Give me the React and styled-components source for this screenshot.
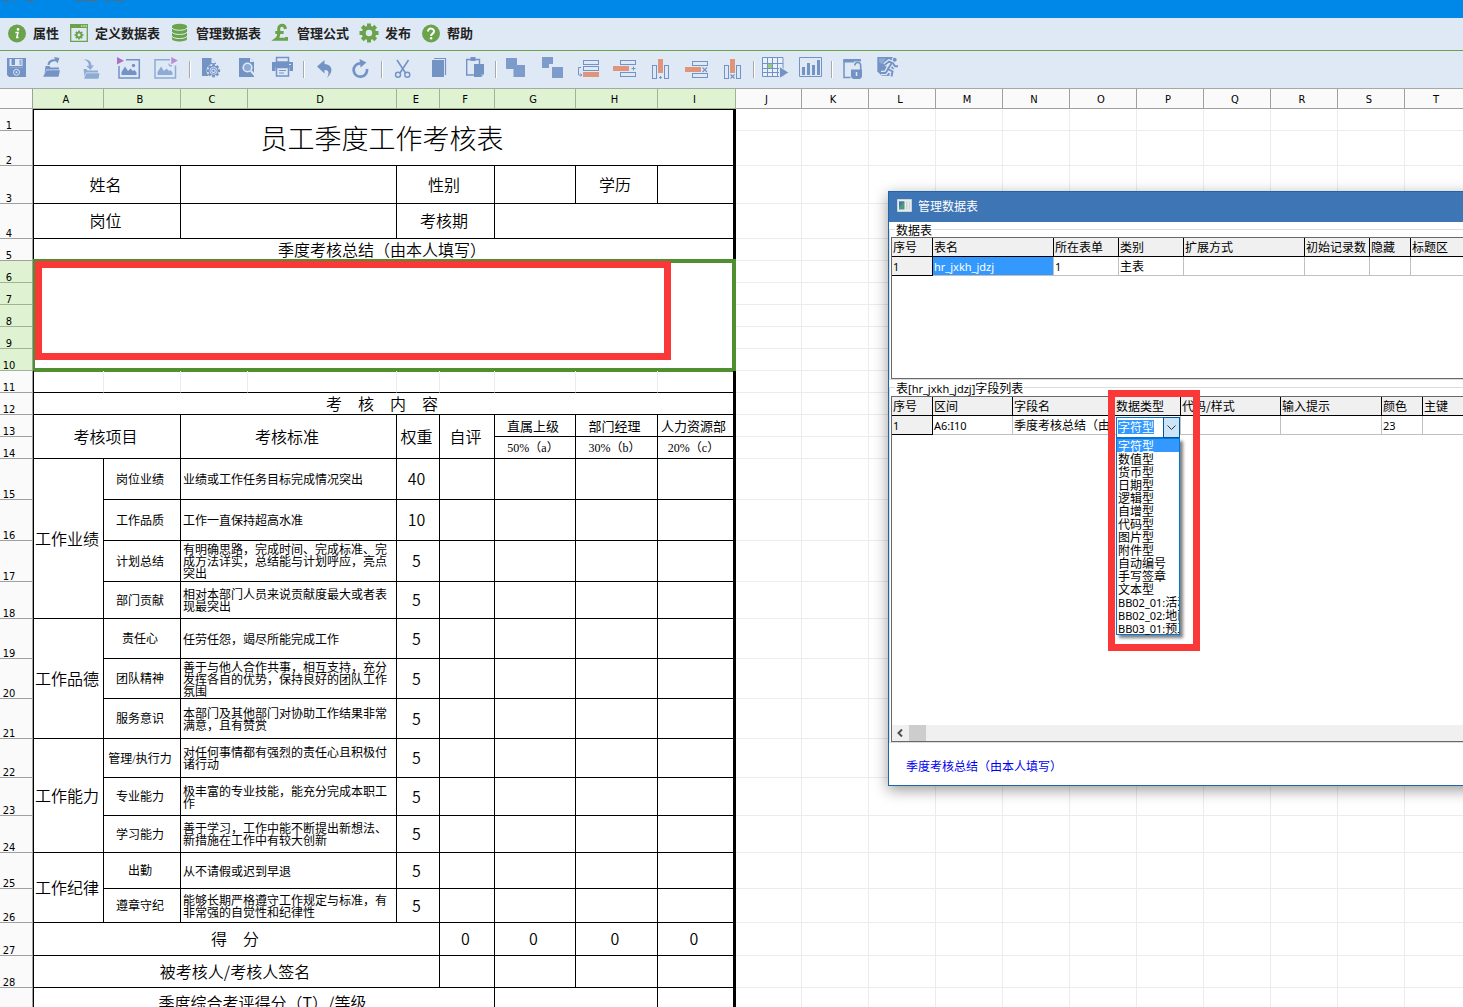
import React, { useEffect, useRef } from "react";
import styled, { createGlobalStyle } from "styled-components";

const GlobalStyle = createGlobalStyle`
  * {
    box-sizing: border-box;
  }

  body {
    margin: 0;
    background: #fff;
    color: #000;
    font-family: "Liberation Serif", "Noto Sans CJK SC", sans-serif;
    font-size: 12px;
  }

  button {
    border: 0;
    padding: 0;
    background: none;
    color: inherit;
    font: inherit;
  }
`;

const BLUE = "#7493c5";
const PALE = "#8fabd4";
const BACK = "#dfe9f6";
const ORANGE = "#e0957a";
const GREEN = "#6ba34a";

/* ---------- window frame ---------- */

const Page = styled.div`
  position: relative;
  height: 100vh;
  display: flex;
  flex-direction: column;
  overflow: hidden;
`;

const TitleStrip = styled.header`
  flex: none;
  height: 18px;
  background: #0088e9;

  svg {
    display: block;
  }
`;

const MenuBar = styled.nav`
  flex: none;
  height: 33px;
  display: flex;
  align-items: center;
  gap: 11px;
  padding: 0 0 2px 8px;
  background: ${BACK};
  border-bottom: 1px solid ${GREEN};
`;

const MenuButton = styled.button`
  display: flex;
  align-items: center;
  gap: 7px;
  font-family: "Noto Sans CJK SC", sans-serif;
  font-size: 13px;
  line-height: 18px;
  font-weight: 700;
  color: #222;
  white-space: nowrap;
`;

const ToolBar = styled.div`
  flex: none;
  height: 38px;
  display: flex;
  align-items: flex-start;
  padding: 6px 0 0 1px;
  background: ${BACK};
  border-bottom: 1px solid #a3ab9e;
`;

const ToolButton = styled.button`
  flex: none;
  width: ${(p) => (p.$wide ? 37 : 36)}px;
  height: 24px;
  padding-left: 6px;

  svg {
    display: block;
    overflow: visible;
  }
`;

const Divider = styled.span`
  flex: none;
  width: 1px;
  height: 17px;
  margin: 4px 2px 0 3px;
  background: #a9a9a9;
  box-shadow: 1px 0 0 #fff;
`;

/* ---------- sheet ---------- */

const Sheet = styled.main`
  flex: 1;
  min-height: 0;
  overflow: hidden;
`;

const SheetTable = styled.table`
  table-layout: fixed;
  width: 1px;
  border-collapse: separate;
  border-spacing: 0;
`;

const ColHead = styled.th`
  height: 20px;
  padding: 1px 4px 0 0;
  font: 400 11px "DejaVu Sans Condensed", "Noto Sans", sans-serif;
  background: ${(p) => (p.$on ? "#dff3d2" : "#fafafa")};
  border-right: 1px solid ${(p) => (p.$on ? "#a0b394" : "#a0a0a0")};
  border-bottom: 1px solid ${(p) => (p.$on ? "#a0b394" : "#a0a0a0")};
`;

const RowHead = styled.th`
  padding: 0 14px 0 0;
  vertical-align: bottom;
  text-align: center;
  font: 400 11px/9px "DejaVu Sans Condensed", "Noto Sans", sans-serif;
  background: ${(p) => (p.$on ? "#dff3d2" : "#fafafa")};
  border-right: 1px solid #a0a0a0;
  border-bottom: 1px solid ${(p) => (p.$on ? "#a0b394" : "#a0a0a0")};
`;

const Row = styled.tr`
  height: ${(p) => p.$h}px;
`;

const Cell = styled.td`
  position: relative;
  padding: ${(p) => (p.$left ? "2px 6px 0 2px" : p.$size < 16 ? "3px 4px 0 0" : "0 3px 0 0")};
  font-family: ${(p) => (p.$size < 16 ? '"Liberation Serif", ' : "")}"Noto Sans CJK SC", sans-serif;
  font-size: ${(p) => p.$size}px;
  line-height: ${(p) => (p.$left ? "12px" : "1.1")};
  font-weight: ${(p) => (p.$size < 16 ? 400 : p.$size > 16 ? 300 : 350)};
  text-align: ${(p) => (p.$left ? "left" : "center")};
  white-space: ${(p) => (p.$left ? "normal" : "pre")};
  border-right: ${(p) => (p.$last ? "3px solid #000" : p.$soft ? "1px solid #ececec" : "1px solid #000")};
  border-bottom: 1px solid #000;
  border-left: ${(p) => (p.$first ? "1px solid #000" : "0")};
  border-top: ${(p) => (p.$top ? "1px solid #000" : "0")};
`;

const BlankCell = styled.td`
  padding: 0;
  border-right: 1px solid #ececec;
  border-bottom: 1px solid #ececec;
`;

const Selection = styled.div`
  position: absolute;
  top: -2px;
  right: -3px;
  bottom: -2px;
  left: -1px;
  border: 4px solid #4f8f2f;
  border-left-width: 2px;
`;

const Frame = styled.div`
  position: absolute;
  border: 7px solid #fb3838;
  pointer-events: none;
`;

const SummaryFrame = styled(Frame)`
  top: 0;
  left: 1px;
  right: 62px;
  bottom: 10px;
`;

const TypeFrame = styled(Frame)`
  top: 198px;
  left: 219px;
  width: 92px;
  height: 261px;
`;

/* ---------- dialog ---------- */

const Dialog = styled.section`
  position: absolute;
  top: 191px;
  left: 888px;
  width: 640px;
  background: #fff;
  border: 1px solid #2065ab;
  box-shadow: 0 4px 14px rgba(0, 0, 0, 0.4);
  font-family: "Noto Sans CJK SC", sans-serif;
  font-size: 12px;
`;

const DialogTitle = styled.h2`
  height: 30px;
  margin: 0;
  padding: 0 0 3px 8px;
  display: flex;
  align-items: center;
  gap: 6px;
  background: #3e75b4;
  color: #fff;
  font-size: 12px;
  font-weight: 400;
`;

const Group = styled.fieldset`
  min-width: 0;
  margin: 0;
  padding: 0 0 0 1px;
  border: 1px solid #dcdcdc;

  & + & {
    padding-top: 1px;
  }

  legend {
    margin-left: 4px;
    padding: 0 1px;
    line-height: 15px;
  }
`;

const GridBox = styled.div`
  display: flex;
  flex-direction: column;
  justify-content: space-between;
  min-height: ${(p) => p.$h}px;
  border: 1px solid #696969;
`;

const Grid = styled.table`
  table-layout: fixed;
  width: 100%;
  border-collapse: separate;
  border-spacing: 0;

  th,
  td {
    height: 19px;
    padding: 0 0 0 1px;
    text-align: left;
    font-weight: 400;
    line-height: 16px;
    white-space: nowrap;
    overflow: hidden;
  }

  thead th {
    background: #f0f0f0;
    border-right: 1px solid #000;
    border-bottom: 1px solid #000;
  }
`;

const GridIndex = styled.th`
  background: #f0f0f0;
  border-right: 1px solid #000;
  border-bottom: 1px solid #000;
`;

const GridCell = styled.td`
  background: ${(p) => (p.$active ? "#3399ff" : "#fff")};
  color: ${(p) => (p.$active ? "#fff" : "#000")};
  border-right: 1px solid #c0c0c0;
  border-bottom: 1px solid #c0c0c0;
`;

const ComboCell = styled(GridCell)`
  && {
    position: relative;
    overflow: visible;
  }
`;

const Latin = styled.span`
  font-family: "Noto Sans", sans-serif;
  font-size: 11px;
  line-height: 11px;
`;

const Combo = styled.div`
  position: absolute;
  top: 1px;
  left: 1px;
  width: 64px;
`;

const ComboField = styled.div`
  display: flex;
  height: 21px;

  input {
    flex: 1;
    min-width: 0;
    padding: 0 0 2px 1px;
    border: 1px solid #0078d7;
    border-right: 0;
    outline: 0;
    background: #fff;
    font: 12px/14px "Noto Sans CJK SC", sans-serif;
  }

  input::selection {
    background: #3399ff;
    color: #fff;
  }

  button {
    width: 17px;
    display: flex;
    align-items: center;
    justify-content: center;
    background: #cce4f7;
    border: 1px solid #005499;
  }
`;

const OptionList = styled.ul`
  margin: 0;
  padding: 0;
  list-style: none;
  background: #fff;
  border: 1px solid #0078d7;
  box-shadow: 3px 3px 3px rgba(0, 0, 0, 0.5);
`;

const Option = styled.li`
  height: 13px;
  padding-left: 1px;
  line-height: 13px;
  white-space: nowrap;
  overflow-x: clip;
  overflow-y: visible;
  background: ${(p) => (p.$active ? "#3399ff" : "transparent")};
  color: ${(p) => (p.$active ? "#fff" : "#000")};
`;

const ScrollTrack = styled.div`
  display: flex;
  height: 16px;
  background: #f0f0f0;

  button {
    width: 17px;
    padding-right: 2px;
    display: flex;
    align-items: center;
    justify-content: center;
  }
`;

const ScrollThumb = styled.div`
  width: 17px;
  background: #cdcdcd;
`;

const DialogNote = styled.p`
  margin: 0;
  padding: 14px 17px 10px;
  line-height: 18px;
  color: #0000f0;
`;

/* ---------- icons ---------- */

const teeth = (cx, cy, r, n, w, color) =>
  Array.from({ length: n }, (_, i) => (
    <rect
      key={i}
      x={cx - w / 2}
      y={cy - r}
      width={w}
      height={r}
      fill={color}
      transform={`rotate(${(360 / n) * i} ${cx} ${cy})`}
    />
  ));

const Gear = ({ cx, cy, r, color, hole }) => (
  <>
    {teeth(cx, cy, r, 8, r * 0.42, color)}
    <circle cx={cx} cy={cy} r={r * 0.76} fill={color} />
    <circle cx={cx} cy={cy} r={r * 0.34} fill={hole} />
  </>
);

const MENU = [
  {
    label: "属性",
    icon: (
      <>
        <circle cx="9" cy="9.5" r="9" fill={GREEN} />
        <circle cx="10" cy="5.4" r="1.3" fill="#fff" />
        <path d="M7.4 8.4h2.6l-1.2 5.2h1.7" fill="none" stroke="#fff" strokeWidth="1.5" />
      </>
    ),
  },
  {
    label: "定义数据表",
    icon: (
      <>
        <path d="M.7.7h16.6v16.6H.7z" fill="none" stroke={GREEN} strokeWidth="1.3" />
        <path d="M0 0h18v4H0z" fill={GREEN} />
        <path d="M11 2h1.5M13.3 2h1.5M15.5 2h1.5" stroke="#fff" strokeWidth="1" />
        <Gear cx={9} cy={11} r={4.4} color={GREEN} hole={BACK} />
      </>
    ),
  },
  {
    label: "管理数据表",
    icon: (
      <>
        <path d="M1 2.5v12.500c0 3.300 15 3.300 15 0V2.500z" fill={GREEN} />
        <ellipse cx="8.5" cy="2.5" rx="7.5" ry="2.7" fill={GREEN} />
        <path d="M1 4c1.500 3 13.500 3 15 0M1 8.200c1.500 3 13.500 3 15 0M1 12.300c1.500 3 13.500 3 15 0" fill="none" stroke={BACK} strokeWidth="1" />
      </>
    ),
  },
  {
    label: "管理公式",
    icon: (
      <path
        d="M13.500 5C13-.300 6.500 0 6.700 5c.1 3.600 1.200 7.500-2.700 10.300h10.500v-2.300M3.300 8.500h8.300"
        fill="none"
        stroke={GREEN}
        strokeWidth="3"
      />
    ),
  },
  { label: "发布", icon: <Gear cx={9} cy={9} r={9.5} color={GREEN} hole={BACK} /> },
  {
    label: "帮助",
    icon: (
      <>
        <circle cx="9" cy="9.5" r="9" fill={GREEN} />
        <path d="M6 7.500c0-4 6.200-3.700 6 .1 0 2-2.900 2-2.900 4.300" fill="none" stroke="#fff" strokeWidth="2" />
        <circle cx="9.1" cy="14.3" r="1.2" fill="#fff" />
      </>
    ),
  },
];

const Outline = ({ x, y, w, h }) => (
  <rect x={x} y={y} width={w} height={h} fill="none" stroke={BLUE} strokeWidth="1" />
);

const TOOLS = [
  [
    {
      name: "保存",
      icon: (
        <>
          <path d="M0 1h19v19H2l-2-2z" fill={BLUE} />
          <path d="M2.5 2h13v7h-13z" fill={BACK} />
          <path d="M4.500 2h3.500v6H4.500z" fill={BLUE} />
          <path d="M12.500 2.500h2V8h-2z" fill={PALE} />
          <path d="M3 10.500h13" stroke={PALE} />
          <circle cx="9.5" cy="15.3" r="3" fill="none" stroke={BACK} strokeWidth="1" />
          <circle cx="9.5" cy="15.3" r="1" fill={BACK} />
        </>
      ),
    },
    {
      name: "打开",
      icon: (
        <>
          <path d="M1.500 9h4l1 1.500H15V12.500H2.500L.5 17zM2.800 13.300H16L14.500 19.700H-1z" fill={BLUE} />
          <path d="M3.500 8C4 3.500 7.500 2 11 2.300L10 0l5.500 1-2 5.500-1.300-2C9 3.800 6 5 5.500 8z" fill={BLUE} />
        </>
      ),
    },
    {
      name: "导入",
      icon: (
        <>
          <path d="M2.500 12h3l1 1.500H17v2H5l-1.500 4zM5.300 16.300H18.500L17.500 21.700H3z" fill={PALE} />
          <path d="M2.500 2.500C8 1.800 10.500 4.500 10.500 8.500l2.500-.5-3.500 5L5 8.800l2.700.2C8 5.500 6 3.500 2.500 2.500z" fill={PALE} />
        </>
      ),
    },
    {
      name: "插入图片",
      icon: (
        <>
          <path d="M8 2.700h13.300V21H1V9" fill="none" stroke={BLUE} strokeWidth="1.500" />
          <path d="M3.500 18v-3l3.500-5.500 3 4.500 2.500-2.500 2.500 2.500 1.500-1 2 2.500V18z" fill={BLUE} />
          <circle cx="15.5" cy="8.5" r="1.7" fill={BLUE} />
          <path d="M-1 0v7.500l7-3.700z" fill="#ad6fc9" />
        </>
      ),
    },
    {
      name: "导出图片",
      icon: (
        <>
          <path d="M15 2.700H0V21h20.500V8.500" fill="none" stroke={PALE} strokeWidth="1.500" />
          <path d="M2.500 18v-3L6 9.500l3 4.500 2.500-2.500L14 14l1.500-1 2 2.500V18z" fill={PALE} />
          <path d="M14 6.500c-.300 2 1.500 3 3 2" fill="none" stroke={PALE} strokeWidth="1.200" />
          <path d="M16.300 0v7.200l6.500-3.600z" fill="#b98ad0" />
        </>
      ),
    },
  ],
  [
    {
      name: "页面设置",
      icon: (
        <>
          <path d="M4 1h9.500l4.500 5v13H4z" fill={BLUE} />
          <path d="M13.500 1v5H18z" fill={BACK} />
          <circle cx="15.500" cy="13.700" r="7" fill={BACK} />
          <Gear cx={15.5} cy={13.7} r={6.6} color={BLUE} hole={BACK} />
          <circle cx="15.500" cy="13.700" r="3.600" fill="none" stroke={BACK} strokeWidth=".8" />
          <circle cx="15.500" cy="13.700" r="1.200" fill={BLUE} />
        </>
      ),
    },
    {
      name: "预览",
      icon: (
        <>
          <path d="M5 1h11l4 4v15H5z" fill={BLUE} />
          <path d="M16 1v4h4z" fill={BACK} />
          <circle cx="13.500" cy="10.500" r="4.300" fill={PALE} stroke={BACK} strokeWidth="1.600" />
          <path d="M17 14l3.500 4" stroke={BACK} strokeWidth="2" />
        </>
      ),
    },
    {
      name: "打印",
      icon: (
        <>
          <path d="M6.500.5h12V5h-12z" fill={BACK} stroke={BLUE} strokeWidth="1.500" />
          <path d="M2 5h21V14h-3.500v-3.500h-14V14H2z" fill={BLUE} />
          <path d="M19 7.500h2" stroke={BACK} />
          <path d="M6.500 10.500h12v8.500h-12z" fill={BACK} stroke={BLUE} strokeWidth="1.500" />
          <path d="M9 13.500h7M9 16h5" stroke={BLUE} />
        </>
      ),
    },
  ],
  [
    {
      name: "撤销",
      icon: <path d="M5 9.500L12.500 3v4c8 .5 9.500 7.500 2.500 14 2.800-5.500 1.500-8-2.500-8v3.500z" fill={BLUE} />,
    },
    {
      name: "重做",
      icon: (
        <>
          <path d="M12 6.300a6.700 6.700 0 1 0 7 5.700" fill="none" stroke={BLUE} strokeWidth="2.700" />
          <path d="M11.500 2l7 3.500-6 5z" fill={BLUE} />
        </>
      ),
    },
  ],
  [
    {
      name: "剪切",
      icon: (
        <>
          <path d="M7 3l8.500 13M18.500 3L10 16" fill="none" stroke={BLUE} strokeWidth="1.600" />
          <circle cx="8" cy="17.700" r="2.500" fill="none" stroke={BLUE} strokeWidth="1.400" />
          <circle cx="17.300" cy="17.700" r="2.500" fill="none" stroke={BLUE} strokeWidth="1.400" />
        </>
      ),
    },
    {
      name: "复制",
      icon: (
        <>
          <path d="M8 1.500h11.500V18" fill="none" stroke={BLUE} strokeWidth="1.200" />
          <path d="M6 3h12v17H6z" fill={BLUE} />
        </>
      ),
    },
    {
      name: "粘贴",
      icon: (
        <>
          <path d="M4.700 2.500h12.800v15.500H4.700z" fill={BACK} stroke={BLUE} strokeWidth="1.400" />
          <path d="M8.500 0h5v4h-5z" fill={BLUE} />
          <path d="M12 7h10v10l-3 3h-7z" fill={BLUE} />
          <path d="M19 20v-3h3z" fill={PALE} />
        </>
      ),
    },
  ],
  [
    {
      name: "合并单元格",
      icon: <path d="M2 1h11v7h8v12H9.500v-8H2z" fill="#7d9bcb" />,
    },
    {
      name: "拆分单元格",
      icon: <path d="M2 0h11v7H9v4H2zM12 10h11v11H12z" fill="#7d9bcb" />,
    },
    {
      name: "追加行",
      icon: (
        <>
          <Outline x={7.5} y={3.5} w={15} h={4} />
          <Outline x={7.5} y={9.5} w={15} h={4} />
          <path d="M7 15h16v5H7z" fill={ORANGE} />
          <path d="M5 10.500H2.500v7.500H6M4.500 16.500L6 18l-1.500 1.500" fill="none" stroke={BLUE} />
        </>
      ),
    },
    {
      name: "插入行",
      icon: (
        <>
          <Outline x={8.5} y={3.5} w={15} h={4} />
          <Outline x={8.5} y={15.5} w={15} h={4} />
          <path d="M1 9h16v5H1z" fill={ORANGE} />
          <path d="M19.500 11.500h4M21.500 9.500v4" stroke={BLUE} />
        </>
      ),
    },
    {
      name: "插入列",
      icon: (
        <>
          <Outline x={4.5} y={8.5} w={4} h={13} />
          <Outline x={16.5} y={8.5} w={4} h={13} />
          <path d="M10 2h5v14h-5z" fill={ORANGE} />
          <path d="M11 20.500h3M12.500 19v3" stroke={BLUE} />
        </>
      ),
    },
    {
      name: "删除行",
      icon: (
        <>
          <Outline x={8.5} y={4.5} w={15} h={4} />
          <Outline x={8.5} y={16.5} w={15} h={4} />
          <path d="M1 10h16v5H1z" fill={ORANGE} />
          <path d="M18.500 10.500l4.500 4.500M23 10.500L18.500 15" stroke={BLUE} strokeWidth="1.200" />
        </>
      ),
    },
    {
      name: "删除列",
      icon: (
        <>
          <Outline x={4.5} y={8.5} w={4} h={13} />
          <Outline x={16.5} y={8.5} w={4} h={13} />
          <path d="M10 2h5v14h-5z" fill={ORANGE} />
          <path d="M10.500 17.500l4 4M14.500 17.500l-4 4" stroke={BLUE} strokeWidth="1.200" />
        </>
      ),
    },
  ],
  [
    {
      name: "数据区域",
      icon: (
        <>
          <path d="M.5.5h20.500v19H.5z" fill="#e8f0fa" stroke={BLUE} />
          <path d="M5.500 0v19.500M10.500 0v19.500M15.500 0v19.500M0 6.500h21M0 11.500h21M0 15.500h21" stroke={BLUE} />
          <path d="M6 7h4v4H6z" fill="#96cc7c" />
          <path d="M17.500 9.500v12l9.500-6z" fill={BLUE} stroke={BACK} />
        </>
      ),
    },
    {
      name: "图表",
      icon: (
        <>
          <path d="M1.500.5h22v19h-22z" fill="none" stroke={BLUE} />
          <path d="M4 10h3v8H4zM9 6h3v12H9zM14 8h3v10h-3zM19 3h3v15h-3z" fill={BLUE} />
        </>
      ),
    },
  ],
  [
    {
      name: "锁定",
      icon: (
        <>
          <path d="M20 2v5M4 3v17.500H10.500" fill="none" stroke={BLUE} strokeWidth="1.500" />
          <path d="M3.300 2h17.400v3.500H3.300z" fill={BLUE} />
          <path d="M14 4.500h7.500V12H14z" fill={BACK} />
          <path d="M14.800 8.500c0-4 5.900-4 5.900 0V13" fill="none" stroke={BLUE} strokeWidth="1.600" />
          <path d="M11 12.500h11V20l-2 2h-7l-2-2z" fill={BLUE} />
          <path d="M16.500 15v4" stroke={BACK} strokeWidth="1.500" />
        </>
      ),
    },
    {
      name: "退出",
      icon: (
        <>
          <path d="M1.300 0H18v16l-3 2.500L12 19H6l-4.700-4.500z" fill={BLUE} />
          <path d="M3 1.500h7L5.500 7 3 5z" fill={PALE} />
          <path d="M8.500 8l4.500-3.500 4 1.700 2 3h3M15 6.500l-3 5.500 4.500 2.500-1 5M12 12.500L9.500 16H5" fill="none" stroke={BACK} strokeWidth="4.500" />
          <circle cx="18.700" cy="2.700" r="3" fill={BACK} />
          <circle cx="18.700" cy="2.700" r="2" fill={BLUE} />
          <path d="M8.500 8l4.500-3.500 4 1.700 2 3h3M15.500 6.500L12 12l4.500 2.500-1 5M12 12.500L9.500 16H5" fill="none" stroke={BLUE} strokeWidth="1.900" />
        </>
      ),
    },
  ],
];

/* ---------- sheet data ---------- */

const COLUMNS = [
  ["A", 71], ["B", 77], ["C", 67], ["D", 149], ["E", 43], ["F", 55],
  ["G", 81], ["H", 82], ["I", 78], ["J", 66],
  ..."KLMNOPQRST".split("").map((c) => [c, 67]),
];
const FORM_COLUMNS = 9;

const scores = [{}, {}, {}, { last: true }];

const item = (name, text, weight) => [
  { text: name, size: 12 },
  { text, size: 12, span: 2, left: true },
  { text: weight },
  ...scores,
];

const group = (text, rows) => ({ text, rows, first: true });

const ROWS = [
  { h: 22, cells: [{ text: "员工季度工作考核表", size: 27, span: 9, rows: 2, first: true, last: true, top: true }] },
  { h: 35, cells: [] },
  {
    h: 38,
    cells: [{ text: "姓名", span: 2, first: true }, { span: 2 }, { text: "性别", span: 2 }, {}, { text: "学历" }, { last: true }],
  },
  {
    h: 35,
    cells: [{ text: "岗位", span: 2, first: true }, { span: 2 }, { text: "考核期", span: 2 }, { span: 3, last: true }],
  },
  { h: 22, cells: [{ text: "季度考核总结（由本人填写）", span: 9, first: true, last: true }] },
  { h: 22, on: true, cells: [{ span: 9, rows: 5, first: true, last: true, selected: true }] },
  { h: 22, on: true, cells: [] },
  { h: 22, on: true, cells: [] },
  { h: 22, on: true, cells: [] },
  { h: 22, on: true, cells: [] },
  {
    h: 22,
    cells: Array.from({ length: 9 }, (_, i) => ({ soft: true, first: i === 0, last: i === 8 })),
  },
  { h: 22, cells: [{ text: "考　核　内　容", span: 9, first: true, last: true }] },
  {
    h: 22,
    cells: [
      { text: "考核项目", span: 2, rows: 2, first: true },
      { text: "考核标准", span: 2, rows: 2 },
      { text: "权重", rows: 2 },
      { text: "自评", rows: 2 },
      { text: "直属上级", size: 13 },
      { text: "部门经理", size: 13 },
      { text: "人力资源部", size: 13, last: true },
    ],
  },
  {
    h: 22,
    cells: [
      { text: "50%（a）", size: 12 },
      { text: "30%（b）", size: 12 },
      { text: "20%（c）", size: 12, last: true },
    ],
  },
  { h: 41, cells: [group("工作业绩", 4), ...item("岗位业绩", "业绩或工作任务目标完成情况突出", "40")] },
  { h: 41, cells: item("工作品质", "工作一直保持超高水准", "10") },
  { h: 41, cells: item("计划总结", "有明确思路，完成时间、完成标准、完成方法详实，总结能与计划呼应，亮点突出", "5") },
  { h: 37, cells: item("部门贡献", "相对本部门人员来说贡献度最大或者表现最突出", "5") },
  { h: 40, cells: [group("工作品德", 3), ...item("责任心", "任劳任怨，竭尽所能完成工作", "5")] },
  { h: 40, cells: item("团队精神", "善于与他人合作共事，相互支持，充分发挥各自的优势，保持良好的团队工作氛围", "5") },
  { h: 40, cells: item("服务意识", "本部门及其他部门对协助工作结果非常满意，且有赞赏", "5") },
  { h: 39, cells: [group("工作能力", 3), ...item("管理/执行力", "对任何事情都有强烈的责任心且积极付诸行动", "5")] },
  { h: 38, cells: item("专业能力", "极丰富的专业技能，能充分完成本职工作", "5") },
  { h: 37, cells: item("学习能力", "善于学习，工作中能不断提出新想法、新措施在工作中有较大创新", "5") },
  { h: 36, cells: [group("工作纪律", 2), ...item("出勤", "从不请假或迟到早退", "5")] },
  { h: 34, cells: item("遵章守纪", "能够长期严格遵守工作规定与标准，有非常强的自觉性和纪律性", "5") },
  {
    h: 33,
    cells: [{ text: "得　分", span: 5, first: true }, { text: "0" }, { text: "0" }, { text: "0" }, { text: "0", last: true }],
  },
  { h: 32, cells: [{ text: "被考核人/考核人签名", span: 5, first: true }, ...scores] },
  { h: 30, cells: [{ text: "季度综合考评得分（T）/等级", span: 6, first: true }, { span: 2 }, { last: true }] },
];

/* ---------- dialog data ---------- */

const TABLE_COLUMNS = [
  ["序号", 41], ["表名", 121], ["所在表单", 65], ["类别", 65],
  ["扩展方式", 121], ["初始记录数", 65], ["隐藏", 41], ["标题区"],
];

const FIELD_COLUMNS = [
  ["序号", 41], ["区间", 80], ["字段名", 102], ["数据类型", 66],
  ["代码/样式", 100], ["输入提示", 101], ["颜色", 41], ["主键"],
];

const TYPES = [
  "字符型", "数值型", "货币型", "日期型", "逻辑型", "自增型", "代码型", "图片型",
  "附件型", "自动编号", "手写签章", "文本型",
  ["BB02_01:", "活动"], ["BB02_02:", "地面"], ["BB03_01:", "预工"],
];

const GridHead = ({ columns }) => (
  <>
    <colgroup>
      {columns.map(([name, width]) => (
        <col key={name} width={width} />
      ))}
    </colgroup>
    <thead>
      <tr>
        {columns.map(([name]) => (
          <th key={name}>{name}</th>
        ))}
      </tr>
    </thead>
  </>
);

const TypeCombo = () => {
  const input = useRef(null);

  useEffect(() => {
    input.current.focus({ preventScroll: true });
    input.current.select();
  }, []);

  return (
    <Combo>
      <ComboField>
        <input ref={input} aria-label="数据类型" defaultValue="字符型" />
        <button type="button" aria-label="展开">
          <svg width="9" height="6" viewBox="0 0 9 6">
            <path d="M.5.5l4 4 4-4" fill="none" stroke="#333" />
          </svg>
        </button>
      </ComboField>
      <OptionList role="listbox" aria-label="数据类型">
        {TYPES.map((type, i) => (
          <Option key={i} role="option" aria-selected={i === 0} $active={i === 0}>
            {Array.isArray(type) ? (
              <>
                <Latin>{type[0]}</Latin>
                {type[1]}
              </>
            ) : (
              type
            )}
          </Option>
        ))}
      </OptionList>
    </Combo>
  );
};

const DataTableDialog = () => (
  <Dialog role="dialog" aria-label="管理数据表">
    <DialogTitle>
      <svg width="15" height="13" viewBox="0 0 15 13">
        <path d="M.5.5h14v12H.5z" fill="#e9edf0" stroke="#c9d3da" />
        <path d="M2 2.500h5.500v8H2z" fill="#4b9a78" />
        <path d="M2 2.500h5.500L2 8z" fill="#4476a8" />
        <path d="M9 2.500h1.500v8H9zM12 2.500h1v8h-1z" fill="#d0d4d6" />
      </svg>
      管理数据表
    </DialogTitle>

    <Group>
      <legend>数据表</legend>
      <GridBox $h={142}>
        <Grid>
          <GridHead columns={TABLE_COLUMNS} />
          <tbody>
            <tr>
              <GridIndex><Latin>1</Latin></GridIndex>
              <GridCell $active><Latin>hr_jxkh_jdzj</Latin></GridCell>
              <GridCell><Latin>1</Latin></GridCell>
              <GridCell>主表</GridCell>
              <GridCell />
              <GridCell />
              <GridCell />
              <GridCell />
            </tr>
          </tbody>
        </Grid>
      </GridBox>
    </Group>

    <Group>
      <legend>
        表<Latin>[hr_jxkh_jdzj]</Latin>字段列表
      </legend>
      <GridBox $h={346}>
        <Grid>
          <GridHead columns={FIELD_COLUMNS} />
          <tbody>
            <tr>
              <GridIndex><Latin>1</Latin></GridIndex>
              <GridCell><Latin>A6:I10</Latin></GridCell>
              <GridCell>季度考核总结（由本人填写）</GridCell>
              <ComboCell>
                <TypeCombo />
              </ComboCell>
              <GridCell />
              <GridCell />
              <GridCell><Latin>23</Latin></GridCell>
              <GridCell />
            </tr>
          </tbody>
        </Grid>
        <ScrollTrack>
          <button type="button" aria-label="向左滚动">
            <svg width="6" height="8" viewBox="0 0 6 8">
              <path d="M5 .5L1.500 4 5 7.500" fill="none" stroke="#505050" strokeWidth="2" />
            </svg>
          </button>
          <ScrollThumb />
        </ScrollTrack>
      </GridBox>
    </Group>

    <DialogNote>季度考核总结（由本人填写）</DialogNote>
    <TypeFrame />
  </Dialog>
);

const App = () => (
  <Page>
    <GlobalStyle />
    <TitleStrip>
      <svg width="130" height="2" viewBox="0 0 130 2">
        <path d="M3 .5h5M12 .5h2M27 .5h7M76 .5h7M86 .5h11M106 .5h4M114 .5h9" stroke="#6a6468" />
      </svg>
    </TitleStrip>

    <MenuBar>
      {MENU.map((m) => (
        <MenuButton key={m.label} type="button">
          <svg width="18" height="18" viewBox="0 0 18 18" overflow="visible">
            {m.icon}
          </svg>
          {m.label}
        </MenuButton>
      ))}
    </MenuBar>

    <ToolBar>
      {TOOLS.map((tools, g) => (
        <React.Fragment key={g}>
          {g > 0 && <Divider />}
          {tools.map((t) => (
            <ToolButton key={t.name} type="button" aria-label={t.name} $wide={g === 0}>
              <svg width="24" height="24" viewBox="0 0 24 24">
                {t.icon}
              </svg>
            </ToolButton>
          ))}
        </React.Fragment>
      ))}
    </ToolBar>

    <Sheet>
      <SheetTable>
        <colgroup>
          <col width="33" />
          {COLUMNS.map(([name, width]) => (
            <col key={name} width={width} />
          ))}
        </colgroup>
        <thead>
          <tr>
            <ColHead />
            {COLUMNS.map(([name], i) => (
              <ColHead key={name} $on={i < FORM_COLUMNS}>{name}</ColHead>
            ))}
          </tr>
        </thead>
        <tbody>
          {ROWS.map((row, r) => (
            <Row key={r} $h={row.h}>
              <RowHead $on={row.on}>{r + 1}</RowHead>
              {row.cells.map((c, i) => (
                <Cell
                  key={i}
                  colSpan={c.span}
                  rowSpan={c.rows}
                  $size={c.size || 16}
                  $left={c.left}
                  $first={c.first}
                  $last={c.last}
                  $top={c.top}
                  $soft={c.soft}
                >
                  {c.text}
                  {c.selected && (
                    <>
                      <Selection />
                      <SummaryFrame />
                    </>
                  )}
                </Cell>
              ))}
              {COLUMNS.slice(FORM_COLUMNS).map(([name]) => (
                <BlankCell key={name} />
              ))}
            </Row>
          ))}
        </tbody>
      </SheetTable>
    </Sheet>

    <DataTableDialog />
  </Page>
);

export default App;
